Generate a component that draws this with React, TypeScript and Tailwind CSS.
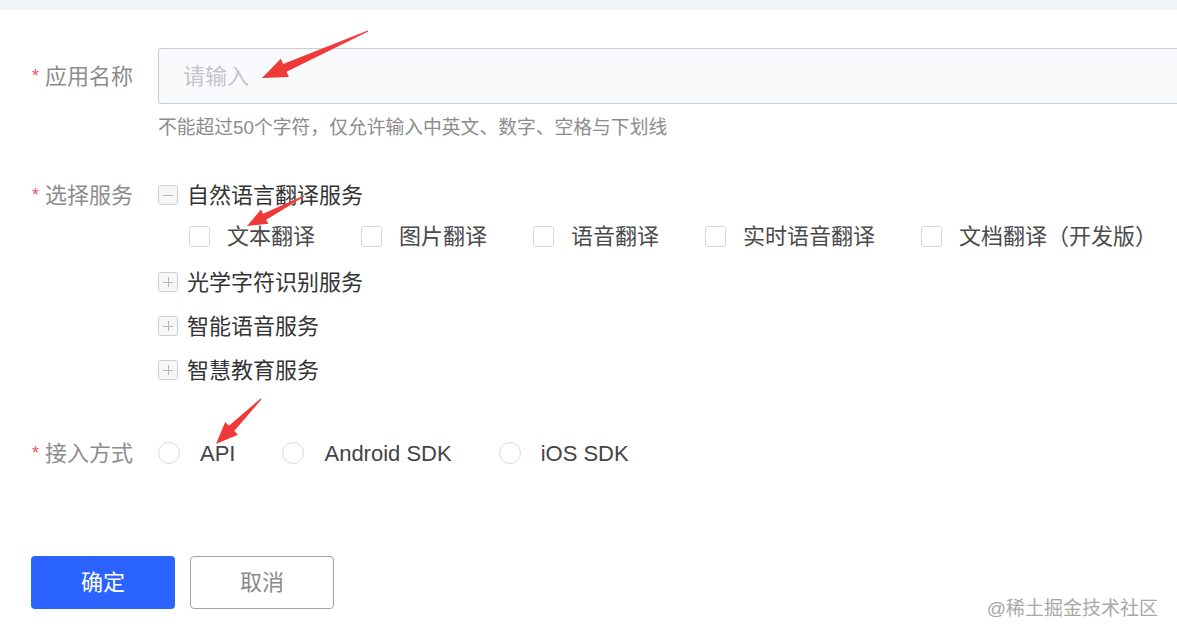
import React from 'react';

const font = "font-['Liberation_Sans','Noto_Sans_CJK_SC',sans-serif]";

// annotation arrow: thin tail, widening shaft, solid head at the tip
function arrowPoints(tx: number, ty: number, fx: number, fy: number, head: number, half: number) {
	const dx = fx - tx;
	const dy = fy - ty;
	const len = Math.hypot(dx, dy);
	const ux = dx / len;
	const uy = dy / len;
	const nx = -uy;
	const ny = ux;
	const bx = tx + ux * head;
	const by = ty + uy * head;
	const neck = half * 0.42;
	const pts = [
		[tx, ty],
		[bx + nx * half, by + ny * half],
		[bx + nx * neck, by + ny * neck],
		[fx + nx * 0.6, fy + ny * 0.6],
		[fx - nx * 0.6, fy - ny * 0.6],
		[bx - nx * neck, by - ny * neck],
		[bx - nx * half, by - ny * half],
	];
	return pts.map((p) => p.join(',')).join(' ');
}

function Label({ text }: { text: string }) {
	return (
		<div className="flex w-[158px] shrink-0 items-center pl-[32px]">
			<span className="mr-[6px] text-[18px] text-[#f2536b]">*</span>
			<span className="whitespace-nowrap text-[22px] text-[#8c8c8c]">{text}</span>
		</div>
	);
}

function TreeBox({ open }: { open?: boolean }) {
	return (
		<span className="relative mr-[9px] inline-block h-[20px] w-[20px] shrink-0 rounded-[3px] border border-[#cfcfcf] bg-[#f7f7f7]">
			<span className="absolute left-[4px] right-[4px] top-[8.5px] h-px bg-[#b5b5b5]" />
			{!open && <span className="absolute bottom-[4px] top-[4px] left-[8.5px] w-px bg-[#b5b5b5]" />}
		</span>
	);
}

function Check({ text }: { text: string }) {
	return (
		<div className="mr-[46px] flex shrink-0 items-center">
			<span className="mr-[17px] inline-block h-[21px] w-[21px] shrink-0 rounded-[3px] border border-[#d6d8dd] bg-white" />
			<span className="whitespace-nowrap text-[22px] text-[#4a4a4a]">{text}</span>
		</div>
	);
}

function Radio({ text }: { text: string }) {
	return (
		<div className="mr-[47px] flex shrink-0 items-center">
			<span className="mr-[20px] inline-block h-[22px] w-[22px] shrink-0 rounded-full border border-[#dcdcdc] bg-white" />
			<span className="whitespace-nowrap text-[22px] text-[#444]">{text}</span>
		</div>
	);
}

export default function App() {
	const subs = ['文本翻译', '图片翻译', '语音翻译', '实时语音翻译', '文档翻译（开发版）'];

	return (
		<div className={`relative h-[640px] w-full overflow-hidden bg-white ${font}`}>
			<div className="h-[10px] bg-[#f4f5f9]" />

			{/* 应用名称 */}
			<div className="mt-[38px] flex h-[56px] items-stretch">
				<Label text="应用名称" />
				<div className="flex flex-1 items-center rounded-l-[4px] border border-r-0 border-[#c9cdd4] bg-[#f9fafc] pl-[24px]">
					<span className="text-[22px] text-[#c2c4c9]">请输入</span>
				</div>
			</div>
			<div className="ml-[158px] mt-[10px] whitespace-nowrap text-[18.8px] leading-[28px] text-[#8c8c8c]">
				不能超过50个字符，仅允许输入中英文、数字、空格与下划线
			</div>

			{/* 选择服务 */}
			<div className="mt-[38px] flex">
				<div className="flex h-[30px] items-center">
					<Label text="选择服务" />
				</div>
				<div className="flex flex-1 flex-col">
					<div className="flex h-[30px] items-center">
						<TreeBox open />
						<span className="text-[22px] text-[#333]">自然语言翻译服务</span>
					</div>
					<div className="mt-[11px] flex h-[30px] items-center pl-[31px]">
						{subs.map((s) => (
							<Check key={s} text={s} />
						))}
					</div>
					<div className="mt-[16px] flex h-[30px] items-center">
						<TreeBox />
						<span className="text-[22px] text-[#333]">光学字符识别服务</span>
					</div>
					<div className="mt-[14px] flex h-[30px] items-center">
						<TreeBox />
						<span className="text-[22px] text-[#333]">智能语音服务</span>
					</div>
					<div className="mt-[14px] flex h-[30px] items-center">
						<TreeBox />
						<span className="text-[22px] text-[#333]">智慧教育服务</span>
					</div>
				</div>
			</div>

			{/* 接入方式 */}
			<div className="mt-[53px] flex h-[30px] items-center">
				<Label text="接入方式" />
				<Radio text="API" />
				<Radio text="Android SDK" />
				<Radio text="iOS SDK" />
			</div>

			<div className="ml-[31px] mt-[88px] flex gap-[15px]">
				<button className="h-[53px] w-[144px] rounded-[4px] bg-[#2b63ff] text-[22px] text-white">确定</button>
				<button className="h-[53px] w-[144px] rounded-[4px] border border-[#a3a3a3] bg-white text-[22px] text-[#8a8a8a]">
					取消
				</button>
			</div>

			<div className="absolute bottom-[17px] right-[19px] text-[19px] text-[#a8a8a8]">@稀土掘金技术社区</div>

			{/* red annotation arrows */}
			<svg className="pointer-events-none absolute left-0 top-0" width="1177" height="640">
				<polygon points={arrowPoints(262, 78, 368, 31, 25, 10)} fill="#f03a3a" />
				<polygon points={arrowPoints(247, 226, 304, 196, 20, 8)} fill="#f03a3a" />
				<polygon points={arrowPoints(216, 444, 261, 399, 22, 9)} fill="#f03a3a" />
			</svg>
		</div>
	);
}
